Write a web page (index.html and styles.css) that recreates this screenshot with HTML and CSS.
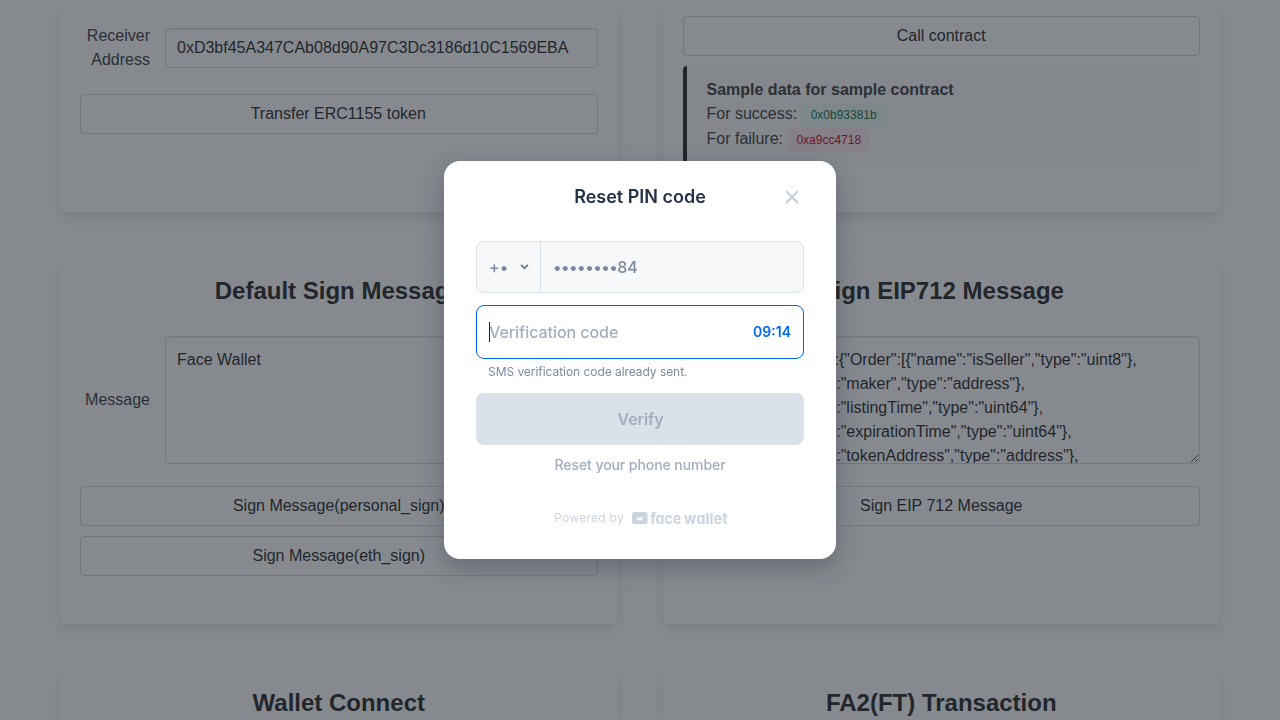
FILE: index.html
```html
<!DOCTYPE html>
<html lang="en">
<head>
<meta charset="utf-8">
<title>Face Wallet Sample</title>
<link rel="stylesheet" href="styles.css">
</head>
<body>
<main class="grid">
  <section class="box box-first">
    <div class="field field-receiver">
      <label class="label">Receiver Address</label>
      <input class="input" value="0xD3bf45A347CAb08d90A97C3Dc3186d10C1569EBA">
    </div>
    <button class="button button-transfer">Transfer ERC1155 token</button>
  </section>
  <section class="box box-contract">
    <button class="button">Call contract</button>
    <div class="message">
      <strong class="message-title">Sample data for sample contract</strong>
      <div class="message-row">For success: <span class="tag success">0x0b93381b</span></div>
      <div class="message-row">For failure: <span class="tag danger">0xa9cc4718</span></div>
    </div>
  </section>
  <section class="box box-sign">
    <h2 class="title">Default Sign Message</h2>
    <div class="field">
      <label class="label">Message</label>
      <textarea class="input area">Face Wallet</textarea>
    </div>
    <div class="buttons">
      <button class="button">Sign Message(personal_sign)</button>
      <button class="button">Sign Message(eth_sign)</button>
    </div>
  </section>
  <section class="box box-sign">
    <h2 class="title">Sign EIP712 Message</h2>
    <div class="field">
      <label class="label">Message</label>
      <textarea class="input area">{"types":{"Order":[{"name":"isSeller","type":"uint8"},
{"name":"maker","type":"address"},
{"name":"listingTime","type":"uint64"},
{"name":"expirationTime","type":"uint64"},
{"name":"tokenAddress","type":"address"},</textarea>
    </div>
    <div class="buttons">
      <button class="button">Sign EIP 712 Message</button>
    </div>
  </section>
  <section class="box box-last"><h2 class="title">Wallet Connect</h2></section>
  <section class="box box-last"><h2 class="title">FA2(FT) Transaction</h2></section>
</main>

<div class="overlay">
  <div class="modal">
    <header class="modal-head">
      <h1 class="modal-title">Reset PIN code</h1>
      <svg class="close" width="24" height="24" viewBox="0 0 24 24" fill="none" stroke="#c3ced9" stroke-width="2" stroke-linecap="round"><path d="M6.8 6.8l10.4 10.4M17.2 6.8l-10.4 10.4"/></svg>
    </header>
    <div class="phone">
      <div class="country"><span class="dial">+<span class="dots">•</span></span>
        <svg width="10" height="8" viewBox="0 0 10 8" fill="none" stroke="#718096" stroke-width="2" stroke-linecap="round" stroke-linejoin="round"><path d="M2.6 2.4l2.9 2.9 2.9-2.9"/></svg>
      </div>
      <div class="number"><span class="dots">••••••••</span>84</div>
    </div>
    <div class="code">
      <span class="caret"></span>
      <span class="placeholder">Verification code</span>
      <span class="timer">09:14</span>
    </div>
    <p class="hint">SMS verification code already sent.</p>
    <button class="verify">Verify</button>
    <a class="reset">Reset your phone number</a>
    <footer class="powered">
      <span>Powered by</span>
      <svg class="logo" width="98" height="16" viewBox="0 0 98 16">
        <rect x="0" y="2" width="15.6" height="12" rx="2" fill="#cbd5e0"/>
        <path d="M4.6 6.9q3.2 1.5 6.4 0c0 2-1.4 3.3-3.2 3.3s-3.2-1.300-3.200-3.300z" fill="#fff"/>
        <text class="wordmark" x="18.3" y="13.500" textLength="31" lengthAdjust="spacingAndGlyphs">face</text>
        <text class="wordmark" x="52" y="13.500" textLength="43.500" lengthAdjust="spacingAndGlyphs">wallet</text>
      </svg>
    </footer>
  </div>
</div>
</body>
</html>
```

FILE: styles.css
```css
* { box-sizing: border-box; }
body {
  margin: 0;
  height: 720px;
  overflow: hidden;
  background: #fff;
  color: #4a4a4a;
  font: 16px/24px "Liberation Sans", Arial, sans-serif;
}
.grid {
  display: grid;
  grid-template-columns: 1fr 1fr;
  grid-template-rows: 212px 367px 51px;
  gap: 45px;
  width: 1160px;
  height: 720px;
  margin: 0 auto;
}
.box {
  padding: 20px;
  border-radius: 6px;
  background: #fff;
  box-shadow: 0 8px 16px -2px rgba(10, 10, 10, .1), 0 0 0 1px rgba(10, 10, 10, .02);
}
.box-first, .box-contract { border-radius: 0 0 6px 6px; }
.box-first { padding-top: 24px; }
.box-contract { padding-top: 16px; }
.box-last { padding-bottom: 0; border-radius: 6px 6px 0 0; }
.title {
  margin: 0 0 32px;
  font-size: 24px;
  line-height: 27px;
  font-weight: 700;
  text-align: center;
  color: #363636;
}
.box-last .title { margin-bottom: 0; }
.field {
  display: flex;
  align-items: center;
  gap: 15px;
  margin-bottom: 22px;
}
.label { width: 70px; text-align: right; }
.input {
  flex: 1;
  min-width: 0;
  height: 40px;
  padding: 7px 11px;
  border: 1px solid #dbdbdb;
  border-radius: 4px;
  background: #fff;
  box-shadow: inset 0 1px 2px rgba(10, 10, 10, .05);
  color: #363636;
  font: inherit;
}
.area {
  height: 128px;
  padding: 11px 11px 0;
  overflow: hidden;
  resize: vertical;
  white-space: pre;
}
.buttons { display: flex; flex-direction: column; gap: 10px; }
.button {
  display: block;
  width: 100%;
  height: 40px;
  padding: 0;
  border: 1px solid #dbdbdb;
  border-radius: 4px;
  background: #fff;
  color: #363636;
  font: inherit;
}
.button-transfer { padding-right: 1px; }
.message {
  height: 98px;
  margin-top: 10px;
  padding: 12px 20px;
  border-left: 4px solid #363636;
  border-radius: 4px;
  background: #fafafa;
}
.message-title { display: block; height: 23px; color: #4a4a4a; }
.message-row { height: 25px; line-height: 25px; }
.tag {
  display: inline-flex;
  align-items: center;
  height: 24px;
  padding: 0 9px;
  border-radius: 4px;
  font-size: 12px;
  line-height: 18px;
}
.success { background: #effaf5; color: #257953; }
.danger { background: #feecf0; color: #cc0f35; }
.overlay {
  position: fixed;
  inset: 0;
  display: flex;
  align-items: center;
  justify-content: center;
  background: rgba(13, 21, 31, .5);
  font-family: Inter, sans-serif;
}
.modal {
  width: 392px;
  height: 398px;
  padding: 20px 32px;
  border-radius: 16px;
  background: #fff;
  box-shadow: 0 8px 24px rgba(32, 39, 50, .32);
}
.modal-head {
  display: flex;
  align-items: center;
  height: 32px;
  margin-bottom: 28px;
}
.modal-title {
  flex: 1;
  margin: 0 -24px 0 0;
  text-align: center;
  font-size: 18px;
  font-weight: 600;
  color: #243248;
}
.phone {
  display: flex;
  height: 52px;
  border: 1px solid #dbe1e8;
  border-radius: 8px;
  background: #f7f8fa;
  color: #7b8aa2;
  font-size: 16px;
  font-weight: 500;
  line-height: 50px;
}
.country {
  display: flex;
  align-items: center;
  justify-content: space-between;
  width: 64px;
  padding: 0 11px 0 12px;
  border-right: 1px solid #dbe1e8;
}
.number { padding-left: 12px; }
.dots { letter-spacing: -.5px; }
.code {
  display: flex;
  align-items: center;
  height: 54px;
  margin-top: 12px;
  padding: 0 12px;
  border: 1px solid #0068f9;
  border-radius: 8px;
}
.caret { width: 1px; height: 20px; margin-right: -1px; background: #1a202c; }
.placeholder { flex: 1; color: #a0aec0; font-weight: 500; letter-spacing: -.05px; }
.timer { color: #0068f9; font-size: 14px; font-weight: 600; }
.hint {
  margin: 4px 12px 12px;
  color: #7b8aa2;
  font-size: 12px;
  line-height: 18px;
  letter-spacing: -.05px;
}
.verify {
  display: block;
  width: 100%;
  height: 52px;
  padding: 0 0 0 1px;
  border: 0;
  border-radius: 8px;
  background: #dbe1e8;
  color: #a0aec0;
  font: 600 16px Inter, sans-serif;
  letter-spacing: -.1px;
}
.reset {
  display: block;
  margin-top: 8px;
  color: #a0aec0;
  font-size: 14px;
  font-weight: 500;
  letter-spacing: -.07px;
  text-align: center;
}
.powered {
  display: flex;
  align-items: center;
  gap: 8px;
  margin: 29px 0 0 78px;
  color: #cbd5e0;
  font-size: 12px;
}
.powered span { letter-spacing: .3px; }
.wordmark {
  fill: #cbd5e0;
  font: 700 15px Inter, sans-serif;
  font-feature-settings: "cv11";
}
```
